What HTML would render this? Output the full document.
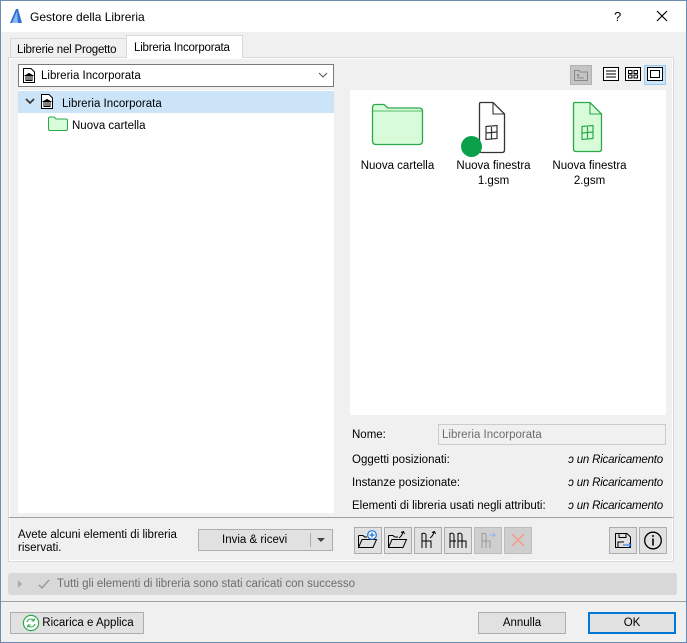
<!DOCTYPE html>
<html><head><meta charset="utf-8"><style>
*{box-sizing:border-box}
body{margin:0;width:687px;height:643px;overflow:hidden;font-family:"Liberation Sans",sans-serif;font-size:11.5px;line-height:17px;color:#000;position:relative;background:#f0f0f0}
.abs{position:absolute;white-space:nowrap}
.title{left:0;top:0;width:687px;height:32px;background:#fff}
.btn{position:absolute;background:#e1e1e1;border:1px solid #adadad;text-align:center;white-space:nowrap}
.tb{position:absolute;top:527px;width:28px;height:27px;background:#e1e1e1;border:1px solid #adadad}
.tb svg{position:absolute;left:2px;top:2px}
.it{font-style:italic;font-size:11.5px;letter-spacing:-0.2px}
</style></head><body>
<div class="abs title"></div>
<svg class="abs" style="left:9px;top:8px" width="14" height="16"><path d="M1 15 L7 1 L9 1 L13 15 Z" fill="#2f6fd6"/><path d="M3 15 L8 3 L9 15Z" fill="#8ab8f0"/></svg>
<div class="abs" style="left:30px;top:9px;font-size:12px">Gestore della Libreria</div>
<div class="abs" style="left:614px;top:8px;font-size:13px">?</div>
<svg class="abs" style="left:656px;top:10px" width="12" height="12"><path d="M1 1L11 11M11 1L1 11" stroke="#000" stroke-width="1.2"/></svg>

<!-- tabs -->
<div class="abs" style="left:10px;top:38px;width:117px;height:20px;border:1px solid #d9d9d9;border-bottom:none;background:#f0f0f0;padding:3px 0 0 6px;letter-spacing:-0.2px">Librerie nel Progetto</div>
<div class="abs" style="left:126px;top:35px;width:117px;height:23px;border:1px solid #d9d9d9;border-bottom:none;background:#fff;padding:4px 0 0 7px;z-index:2;letter-spacing:-0.2px">Libreria Incorporata</div>
<div class="abs" style="left:8px;top:57px;width:666px;height:505px;border:1px solid #d9d9d9;background:#f0f0f0"></div>
<div class="abs" style="left:9px;top:58px;width:664px;height:503px;background:#f0f0f0;border:1px solid #fff"></div>

<!-- dropdown -->
<div class="abs" style="left:18px;top:64px;width:316px;height:23px;background:#fff;border:1px solid #7a7a7a;padding:3px 0 0 22px">Libreria Incorporata</div>
<svg class="abs" style="left:22px;top:67px" width="14" height="17"><path d="M1.5 1.5H9L12.5 5V15.5H1.5Z" fill="#fff" stroke="#000"/><path d="M3.5 8.5L7 6.5 10.5 8.5ZM4 9v4M6 9v4M8 9v4M10 9v4M3.5 13.5h7" stroke="#000" fill="#000" stroke-width="1"/></svg>
<svg class="abs" style="left:318px;top:71px" width="10" height="8"><path d="M1 2L5 6 9 2" stroke="#555" fill="none"/></svg>

<!-- tree -->
<div class="abs" style="left:18px;top:90px;width:316px;height:423px;background:#fff"></div>
<div class="abs" style="left:18px;top:91px;width:316px;height:22px;background:#cce4f7"></div>
<svg class="abs" style="left:25px;top:97px" width="10" height="8"><path d="M1 2L5 6 9 2" stroke="#333" stroke-width="1.6" fill="none"/></svg>
<svg class="abs" style="left:40px;top:93px" width="14" height="17"><path d="M1.5 1.5H9L12.5 5V15.5H1.5Z" fill="#fff" stroke="#000"/><path d="M3.5 8.5L7 6.5 10.5 8.5ZM4 9v4M6 9v4M8 9v4M10 9v4M3.5 13.5h7" stroke="#000" fill="#000" stroke-width="1"/></svg>
<div class="abs" style="left:62px;top:96px">Libreria Incorporata</div>
<svg class="abs" style="left:48px;top:116px" width="20" height="15"><path d="M0.5 2.5Q0.5 1 2 1H6L8 3H18Q19.5 3 19.5 4.5V13Q19.5 14.5 18 14.5H2Q0.5 14.5 0.5 13Z" fill="#d8fbd9" stroke="#2aa84a"/></svg>
<div class="abs" style="left:72px;top:118px">Nuova cartella</div>

<!-- view buttons -->
<div class="abs" style="left:570px;top:65px;width:22px;height:20px;background:#c4c4c4;border:1px solid #b3b3b3"></div>
<svg class="abs" style="left:574px;top:69px" width="14" height="12"><path d="M0.5 1.5H5L6 3H13.5V11.5H0.5Z" fill="none" stroke="#8a8a8a"/><path d="M4 5v4h6M4 5L3 6.5M4 5L5 6.5" stroke="#8a8a8a" fill="none"/></svg>
<svg class="abs" style="left:603px;top:67px" width="16" height="14"><rect x=".5" y=".5" width="15" height="13" fill="#fff" stroke="#000"/><path d="M3 4h10M3 7h10M3 10h10" stroke="#000"/></svg>
<svg class="abs" style="left:625px;top:67px" width="16" height="14"><rect x=".5" y=".5" width="15" height="13" fill="#fff" stroke="#000"/><rect x="3.5" y="3.5" width="3.5" height="3" fill="none" stroke="#000"/><rect x="9" y="3.5" width="3.5" height="3" fill="none" stroke="#000"/><rect x="3.5" y="8" width="3.5" height="3" fill="none" stroke="#000"/><rect x="9" y="8" width="3.5" height="3" fill="none" stroke="#000"/></svg>
<div class="abs" style="left:644px;top:65px;width:22px;height:20px;background:#cce4f7;border:1px solid #99c9ef"></div>
<svg class="abs" style="left:647px;top:67px" width="16" height="14"><rect x=".5" y=".5" width="15" height="13" fill="#fff" stroke="#000"/><rect x="3.5" y="3.5" width="9" height="7" fill="none" stroke="#000"/></svg>

<!-- preview -->
<div class="abs" style="left:350px;top:90px;width:316px;height:325px;background:#fff"></div>
<svg class="abs" style="left:371px;top:103px" width="53" height="43"><path d="M1.5 5Q1.5 1.5 4 1.5H13L17 5H48Q51.5 5 51.5 8V38Q51.5 41.5 48 41.5H5Q1.5 41.5 1.5 38Z" fill="#d8fbd9" stroke="#2aa84a" stroke-width="1.3"/><path d="M1.5 8H51.5" stroke="#2aa84a" stroke-width="0.8"/></svg>
<div class="abs" style="left:350px;top:159px;width:95px;text-align:center;line-height:15px">Nuova cartella</div>
<svg class="abs" style="left:460px;top:101px" width="56" height="58"><path d="M20.5 1.5H33L44.5 13V49Q44.5 51.5 42 51.5H22Q19.5 51.5 19.5 49V3Q19.5 1.5 20.5 1.5Z" fill="#fff" stroke="#333" stroke-width="1.3"/><path d="M33 1.5V13H44.5" fill="none" stroke="#333" stroke-width="1.1"/><path d="M26 25.5L37 24.5V37.5L26 38.5ZM31.5 25V38M26 32L37 31" fill="none" stroke="#333" stroke-width="1.2"/><circle cx="11.5" cy="45.5" r="10.5" fill="#0ba14a"/></svg>
<div class="abs" style="left:446px;top:159px;width:95px;text-align:center;line-height:15px">Nuova finestra<br>1.gsm</div>
<svg class="abs" style="left:572px;top:101px" width="36" height="52"><path d="M2.5 1.5H18L29.5 13V48Q29.5 50.5 27 50.5H4Q1.5 50.5 1.5 48V3Q1.5 1.5 2.5 1.5Z" fill="#d8fbd9" stroke="#2aa84a" stroke-width="1.3"/><path d="M18 1.5V13H29.5" fill="none" stroke="#2aa84a" stroke-width="1.1"/><path d="M10 25.5L21 24.5V37.5L10 38.5ZM15.5 25V38M10 32L21 31" fill="none" stroke="#2aa84a" stroke-width="1.2"/></svg>
<div class="abs" style="left:542px;top:159px;width:95px;text-align:center;line-height:15px">Nuova finestra<br>2.gsm</div>

<!-- info -->
<div class="abs" style="left:352px;top:427px">Nome:</div>
<div class="abs" style="left:438px;top:424px;width:228px;height:21px;border:1px solid #ccc;background:#f0f0f0;color:#6d6d6d;padding:2px 0 0 3px">Libreria Incorporata</div>
<div class="abs" style="left:352px;top:452px">Oggetti posizionati:</div>
<div class="abs" style="left:352px;top:475px">Instanze posizionate:</div>
<div class="abs" style="left:352px;top:498px">Elementi di libreria usati negli attributi:</div>
<div class="abs it" style="left:550px;top:452px;width:113px;text-align:right">ɔ un Ricaricamento</div>
<div class="abs it" style="left:550px;top:475px;width:113px;text-align:right">ɔ un Ricaricamento</div>
<div class="abs it" style="left:550px;top:498px;width:113px;text-align:right">ɔ un Ricaricamento</div>

<div class="abs" style="left:9px;top:517px;width:664px;height:1px;background:#a0a0a0"></div>
<div class="abs" style="left:18px;top:529px;line-height:13px">Avete alcuni elementi di libreria<br>riservati.</div>
<div class="btn" style="left:198px;top:529px;width:135px;height:22px;padding-top:2px;text-align:left;padding-left:23px">Invia &amp; ricevi</div>
<div class="abs" style="left:310px;top:533px;width:1px;height:14px;background:#adadad"></div>
<svg class="abs" style="left:317px;top:538px" width="8" height="5"><path d="M0 0H8L4 4Z" fill="#444"/></svg>

<!-- toolbar -->
<div class="tb" style="left:354px"><svg width="22" height="20"><path d="M1.5 5.5H6L7.5 7H10M1.5 5.5V17.5H16L19.5 9.5H5L1.5 17.5" fill="none" stroke="#000"/><circle cx="15" cy="5" r="4.3" fill="#fff" stroke="#1a6fd8" stroke-width="1.2"/><path d="M15 2.5v5M12.5 5h5" stroke="#1a6fd8" stroke-width="1.2"/></svg></div>
<div class="tb" style="left:384px"><svg width="22" height="20"><path d="M1.5 5.5H6L7.5 7H11M1.5 5.5V17.5H16L19.5 9.5H5L1.5 17.5" fill="none" stroke="#000"/><path d="M12 8Q15 6 16 2M14 2.5L16.5 1.5 17.5 4" fill="none" stroke="#000"/></svg></div>
<div class="tb" style="left:414px"><svg width="22" height="20"><path d="M5 3v15M5 11h9v7M9 11v7M5 4Q7 2 9 4.5V11" fill="none" stroke="#000"/><path d="M13 8Q16 6 17 2M15 2.5L17.5 1.5 18.5 4" fill="none" stroke="#000"/></svg></div>
<div class="tb" style="left:444px"><svg width="22" height="20"><path d="M3 3v15M3 11h6M3 4Q5 2 7 4.5V11M11 3v15M11 11h8v7M15 11v7M11 4Q13 2 15 4.5V11M7 11v7" fill="none" stroke="#000"/></svg></div>
<div class="tb" style="left:474px;background:#cfcfcf;border-color:#bdbdbd"><svg width="22" height="20"><path d="M5 3v15M5 11h8v7M9 11v7M5 4Q7 2 9 4.5V11" fill="none" stroke="#999"/><path d="M12 5h6M16 3l2 2-2 2" fill="none" stroke="#8fb6ef"/></svg></div>
<div class="tb" style="left:504px;background:#cfcfcf;border-color:#bdbdbd"><svg width="22" height="20"><path d="M5 4L17 16M17 4L5 16" stroke="#f0a090" stroke-width="1.6"/></svg></div>
<div class="tb" style="left:609px"><svg width="22" height="20"><path d="M3.5 3.5H15L18.5 7V17.5H3.5Z" fill="none" stroke="#000"/><path d="M7 3.5V7.5H14V3.5M6 17.5V12H12" fill="none" stroke="#000"/><path d="M11 15h8M17 13l2 2-2 2" fill="none" stroke="#1a6fd8"/></svg></div>
<div class="tb" style="left:639px"><svg width="22" height="20"><circle cx="11" cy="10.5" r="8.3" fill="none" stroke="#000" stroke-width="1.3"/><path d="M11 8.5v7" stroke="#000" stroke-width="1.6"/><circle cx="11" cy="6" r="1" fill="#000"/></svg></div>

<!-- status -->
<div class="abs" style="left:8px;top:573px;width:669px;height:22px;background:#d8d8d8;border-radius:3px"></div>
<svg class="abs" style="left:18px;top:580px" width="5" height="8"><path d="M0 0L4 4 0 8Z" fill="#aaa"/></svg>
<svg class="abs" style="left:38px;top:578px" width="12" height="12"><path d="M1 7L4 10 11 2" stroke="#999" stroke-width="1.4" fill="none"/></svg>
<div class="abs" style="left:57px;top:576px;color:#6d6d6d">Tutti gli elementi di libreria sono stati caricati con successo</div>
<div class="abs" style="left:0;top:601px;width:687px;height:1px;background:#a0a0a0"></div>

<div class="btn" style="left:10px;top:612px;width:134px;height:22px;padding:2px 0 0 22px">Ricarica e Applica</div>
<svg class="abs" style="left:22px;top:614px" width="18" height="18"><circle cx="9" cy="9" r="7.6" fill="#fff" stroke="#2aa84a" stroke-width="1.2"/><path d="M5 8Q6 5 9 5Q11 5 12 7M12 7L12.5 4.5M12 7L9.5 7M13 10Q12 13 9 13Q7 13 6 11M6 11L5.5 13.5M6 11L8.5 11" fill="none" stroke="#2aa84a" stroke-width="1.1"/></svg>
<div class="btn" style="left:478px;top:612px;width:88px;height:22px;padding-top:2px">Annulla</div>
<div class="btn" style="left:588px;top:612px;width:88px;height:22px;padding-top:1px;border:2px solid #0078d7">OK</div>
<div class="abs" style="left:0;top:0;width:687px;height:643px;border:1px solid #6b8cae;pointer-events:none"></div>
</body></html>
